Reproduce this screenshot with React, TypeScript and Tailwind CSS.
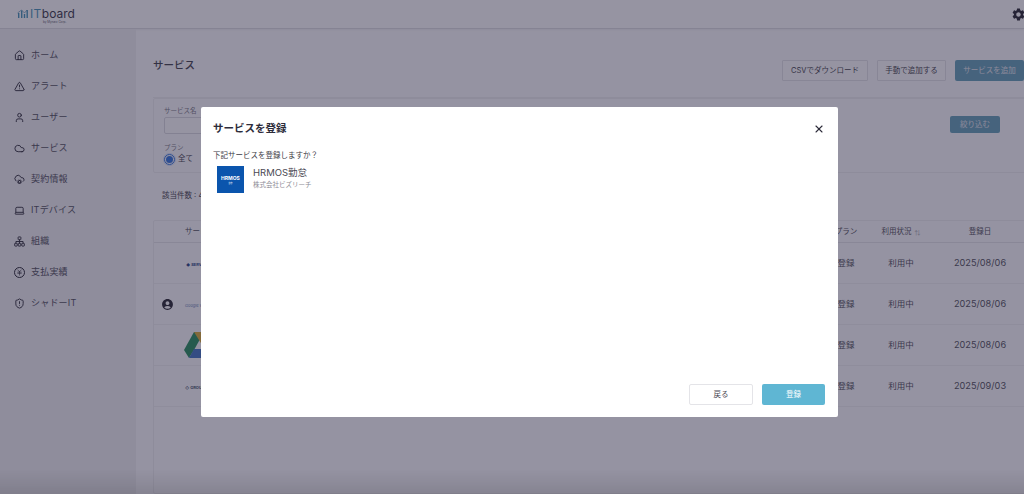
import { AlertTriangle, Cloud, CloudCog, Home, JapaneseYen, Laptop, ShieldAlert, User, X } from 'lucide-react';
import { MdAccountCircle, MdSettings } from 'react-icons/md';

function OrgIcon({ className }: { className?: string }) {
  return (
    <svg className={className} viewBox="0 0 24 24" fill="none" stroke="currentColor" strokeWidth="2">
      <rect x="9" y="2" width="6" height="6" rx="1" />
      <rect x="1.500" y="16" width="5.500" height="6" rx="1" />
      <rect x="9.250" y="16" width="5.500" height="6" rx="1" />
      <rect x="17" y="16" width="5.500" height="6" rx="1" />
      <path d="M12 8v8M4.200 16v-4h15.600v4" />
    </svg>
  );
}

const nav = [
  { label: 'ホーム', icon: Home },
  { label: 'アラート', icon: AlertTriangle },
  { label: 'ユーザー', icon: User },
  { label: 'サービス', icon: Cloud },
  { label: '契約情報', icon: CloudCog },
  { label: 'ITデバイス', icon: Laptop },
  { label: '組織', icon: OrgIcon },
  { label: '支払実績', icon: JapaneseYen },
  { label: 'シャドーIT', icon: ShieldAlert },
];

function Logo() {
  return (
    <div className="flex flex-col pt-[3px]">
      <div className="flex h-[12px] items-center gap-[2px]">
        <svg width="11" height="9" viewBox="0 0 11 9">
          <path d="M1 9V4h1.400v5zM4 9V1.500h1.400V9zM6.800 9V5h1.400v4zM9.500 9V1h1.400v8z" fill="#3f8fb5" />
          <path d="M0.500 4 4.500 1 7.500 4 10 1" stroke="#3f7fa5" strokeWidth="0.6" fill="none" />
        </svg>
        <span className="text-[12px] leading-none tracking-[0.4px] text-[#3f8fb5]">IT</span>
        <span className="-ml-[2px] text-[12px] leading-none text-[#33313f]">board</span>
      </div>
      <span className="ml-[26px] mt-[1px] text-[3px] leading-none text-[#55535f]">by Mynavi Corp.</span>
    </div>
  );
}

function DriveIcon() {
  return (
    <svg width="30" height="26" viewBox="0 0 30 26">
      <path d="M10 0h10l-10 18-5 8-5-8z" fill="#1f8a57" />
      <path d="M10 0h10l10 16H20z" fill="#d9a92e" />
      <path d="M5 26l5-9h20l-5 9z" fill="#3a6fc0" />
    </svg>
  );
}

const rows = [
  { date: '2025/08/06', logo: <span className="ml-[1px] text-[4px] font-bold text-[#1d3f80]">◆ SERVICE</span>, person: false },
  { date: '2025/08/06', logo: <span className="text-[4px] text-[#5a7ab0]">Google Workspace</span>, person: true },
  { date: '2025/08/06', logo: <div className="-ml-[1px]"><DriveIcon /></div>, person: false },
  { date: '2025/09/03', logo: <span className="text-[4px] font-bold text-[#3a4a60]">◇ GROUP</span>, person: false },
];

export default function App() {
  return (
    <div className="relative h-[494px] w-[1024px] overflow-hidden bg-[#fdfdfe] font-['Inter','Noto_Sans_CJK_JP',sans-serif] text-[#3b3a45]">
      <header className="flex h-[29px] items-center justify-between border-b border-[#dcdce0] bg-white pl-[17px] shadow-[0_1px_2px_rgba(0,0,0,0.06)]">
        <Logo />
        <MdSettings className="-mr-[2px] h-[15px] w-[15px] text-[#1f1e28]" />
      </header>

      <div className="flex h-[465px]">
        <aside className="flex w-[136px] shrink-0 flex-col gap-[11px] bg-[#f0f0f3] pl-[14px] pt-[16px]">
          {nav.map(({ label, icon: Icon }, i) => (
            <div key={label} className="flex h-[20px] items-center gap-[5px] text-[9px] tracking-[0.2px] text-[#4a4953]">
              {i === 7 ? (
                <span className="flex h-[11px] w-[11px] items-center justify-center rounded-full border border-[#1f1e28]">
                  <Icon className="h-[7px] w-[7px] text-[#1f1e28]" strokeWidth={2} />
                </span>
              ) : (
                <Icon className="h-[11px] w-[11px] text-[#1f1e28]" strokeWidth={2} />
              )}
              <span className="ml-[1px]">{label}</span>
            </div>
          ))}
        </aside>

        <main className="flex min-w-0 flex-1 flex-col pl-[17px]">
          <div className="flex items-start justify-between border-b border-[#eeeef0] pb-[16px] pt-[31px]">
            <h1 className="-mt-[2px] text-[10.5px] font-medium text-[#3b3a45]">サービス</h1>
            <div className="flex gap-[9px]">
              <button className="h-[21px] w-[86px] rounded-[1px] border border-[#e2e2e6] bg-white text-[7.5px] text-[#3b3a45]">CSVでダウンロード</button>
              <button className="h-[21px] w-[69px] rounded-[1px] border border-[#e2e2e6] bg-white text-[7.5px] text-[#3b3a45]">手動で追加する</button>
              <button className="h-[21px] w-[69px] rounded-[2px] bg-[#5f9db5] text-[7.5px] text-[#e8e8ee]">サービスを追加</button>
            </div>
          </div>

          <section className="flex h-[75px] w-[880px] shrink-0 justify-between rounded-[2px] border border-[#eeeef1] pl-[10px] pr-[32px] pt-[7px]">
            <div>
              <div className="text-[6.5px] leading-[10px] text-[#76757f]">サービス名</div>
              <div className="mt-[1px] h-[17px] w-[120px] rounded-[2px] border border-[#d9d9de] bg-white" />
              <div className="mt-[9px] text-[6.5px] leading-[10px] text-[#76757f]">プラン</div>
              <div className="flex items-center gap-[3px] text-[7.5px] leading-[12px]">
                <span className="flex h-[11px] w-[11px] items-center justify-center rounded-full border border-[#2b6fdc] shadow-[0_0_0_1px_rgba(43,111,220,0.2)]">
                  <span className="h-[7px] w-[7px] rounded-full bg-[#2b6fdc]" />
                </span>
                全て
              </div>
            </div>
            <button className="mt-[10px] h-[17px] w-[50px] rounded-[2px] bg-[#5f9db5] text-[7.5px] text-[#e8e8ee]">絞り込む</button>
          </section>

          <div className="mt-[17px] pl-[9px] text-[7.5px] leading-[12px]">該当件数 : 4件</div>

          <section className="mt-[18px] w-[880px] flex-1 rounded-[2px] border border-[#eeeef1]">
            <div className="flex h-[22px] items-center border-b border-[#e4e4e8] pt-[1px] text-[7.5px] text-[#4a4953]">
              <div className="w-[26px] shrink-0" />
              <div className="flex-1 pl-[5px]">サービス名</div>
              <div className="w-[56px] text-center">プラン</div>
              <div className="flex w-[54px] items-center justify-center gap-[3px]">
                利用状況 <span className="text-[6px] text-[#9a9aa2]">⇅</span>
              </div>
              <div className="w-[104px] text-center">登録日</div>
            </div>
            {rows.map((row, i) => (
              <div key={i} className="flex h-[41px] items-center border-b border-[#f0f0f2] text-[8.5px] text-[#4a4953]">
                <div className="flex w-[26px] shrink-0 justify-center">
                  {row.person && <MdAccountCircle className="h-[13px] w-[13px] text-[#1f1e28]" />}
                </div>
                <div className="flex-1 pl-[5px]">{row.logo}</div>
                <div className="w-[56px] text-center">登録</div>
                <div className="w-[54px] text-center">利用中</div>
                <div className="w-[104px] text-center text-[9.2px]">{row.date}</div>
              </div>
            ))}
          </section>
        </main>
      </div>

      <div className="absolute inset-0 z-10 bg-[#2d2a45]/50 backdrop-blur-[0.5px]" />
      <div className="absolute inset-x-0 bottom-0 z-10 h-[24px] bg-gradient-to-b from-transparent to-black/10" />

      <div className="absolute left-[201px] top-[107px] z-20 flex h-[310px] w-[637px] flex-col rounded-[2px] bg-white pb-[12px] pl-[12px] pr-[13px] pt-[14px]">
        <div className="flex items-center justify-between">
          <h2 className="text-[10.5px] font-bold leading-[16px] text-[#2d2c3a]">サービスを登録</h2>
          <X className="h-[12px] w-[12px] text-[#2d2c3a]" strokeWidth={2.2} />
        </div>
        <p className="mt-[13px] text-[7.5px] leading-[12px] text-[#3b3a45]">下記サービスを登録しますか？</p>
        <div className="mt-[4px] flex pl-[4px]">
          <div className="flex h-[27px] w-[27px] flex-col items-center justify-center bg-[#0b55ad] text-white">
            <span className="text-[5px] font-bold leading-none">HRMOS</span>
            <span className="mt-[1px] text-[2px] leading-none">勤怠</span>
          </div>
          <div className="ml-[9px]">
            <div className="text-[9.5px] leading-[14px] text-[#4a4953]">HRMOS勤怠</div>
            <div className="text-[6.5px] leading-[10px] text-[#8e8d96]">株式会社ビズリーチ</div>
          </div>
        </div>
        <div className="mt-auto flex justify-end gap-[9px]">
          <button className="h-[21px] w-[64px] rounded-[2px] border border-[#e4e4e8] bg-white text-[7.5px] text-[#4a4953]">戻る</button>
          <button className="h-[21px] w-[63px] rounded-[2px] bg-[#5fb6d3] text-[7.5px] text-white">登録</button>
        </div>
      </div>
    </div>
  );
}
